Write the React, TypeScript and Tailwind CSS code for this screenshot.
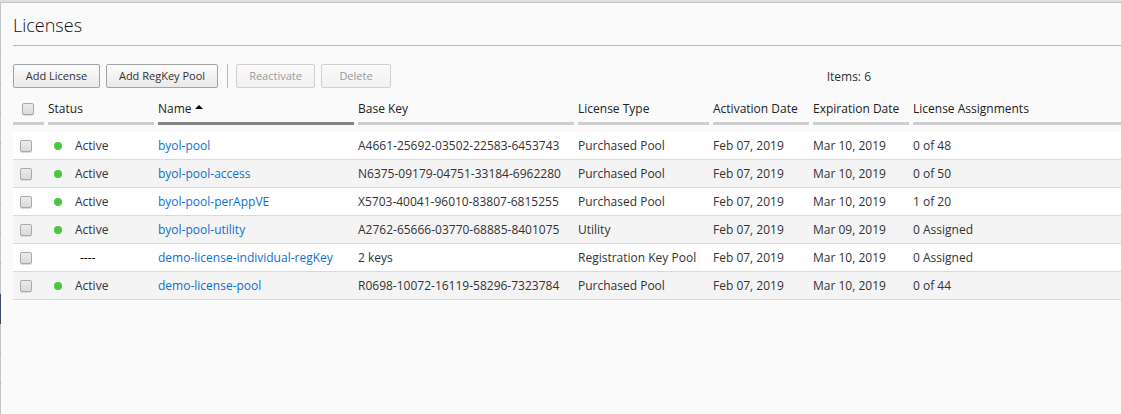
import React from "react";

type License = {
  status: "Active" | "----";
  name: string;
  baseKey: string;
  type: string;
  activation: string;
  expiration: string;
  assignments: string;
};

const licenses: License[] = [
  { status: "Active", name: "byol-pool", baseKey: "A4661-25692-03502-22583-6453743", type: "Purchased Pool", activation: "Feb 07, 2019", expiration: "Mar 10, 2019", assignments: "0 of 48" },
  { status: "Active", name: "byol-pool-access", baseKey: "N6375-09179-04751-33184-6962280", type: "Purchased Pool", activation: "Feb 07, 2019", expiration: "Mar 10, 2019", assignments: "0 of 50" },
  { status: "Active", name: "byol-pool-perAppVE", baseKey: "X5703-40041-96010-83807-6815255", type: "Purchased Pool", activation: "Feb 07, 2019", expiration: "Mar 10, 2019", assignments: "1 of 20" },
  { status: "Active", name: "byol-pool-utility", baseKey: "A2762-65666-03770-68885-8401075", type: "Utility", activation: "Feb 07, 2019", expiration: "Mar 09, 2019", assignments: "0 Assigned" },
  { status: "----", name: "demo-license-individual-regKey", baseKey: "2 keys", type: "Registration Key Pool", activation: "Feb 07, 2019", expiration: "Mar 10, 2019", assignments: "0 Assigned" },
  { status: "Active", name: "demo-license-pool", baseKey: "R0698-10072-16119-58296-7323784", type: "Purchased Pool", activation: "Feb 07, 2019", expiration: "Mar 10, 2019", assignments: "0 of 44" },
];

const columns = [
  { label: "Status", width: "w-[110px]" },
  { label: "Name", width: "w-[200px]", sorted: true },
  { label: "Base Key", width: "w-[220px]" },
  { label: "License Type", width: "w-[135px]" },
  { label: "Activation Date", width: "w-[100px]" },
  { label: "Expiration Date", width: "w-[100px]" },
  { label: "License Assignments", width: "", last: true },
];

function ToolButton({ children, width, disabled }: { children: React.ReactNode; width: string; disabled?: boolean }) {
  return (
    <button
      type="button"
      disabled={disabled}
      className={`${width} h-6 shrink-0 whitespace-nowrap rounded-xs border border-[#a3a3a3] bg-linear-to-b from-[#fcfcfc] to-[#e9e9e9] text-[11px] leading-4 text-[#333] disabled:border-[#cfcfcf] disabled:from-[#fafafa] disabled:to-[#f1f1f1] disabled:text-[#999]`}
    >
      {children}
    </button>
  );
}

function Tick({ label }: { label: string }) {
  return (
    <input
      type="checkbox"
      aria-label={label}
      className="block size-3 appearance-none rounded-xs border border-[#a9a9a9] bg-linear-to-b from-[#ececec] to-[#dadada] shadow-[0_1px_0_#dcdcdc] checked:bg-[#1a73c9]"
    />
  );
}

function NavEdge() {
  return (
    <div aria-hidden="true" className="flex w-px shrink-0 flex-col bg-[#c6c6c6]">
      <div className="h-[52px] border-b border-[#a9a9a9]" />
      {Array.from({ length: 8 }, (_, i) => (
        <div key={i} className="h-[30px] border-b border-[#a9a9a9]" />
      ))}
      <div className="h-[30px] bg-[#3a4c68]" />
      <div className="h-[30px] border-b border-[#a9a9a9]" />
      <div className="h-[30px] border-b border-[#a9a9a9]" />
    </div>
  );
}

export default function App() {
  return (
    <div className="flex min-h-screen flex-col overflow-hidden border-t-2 border-[#dadfe2] bg-[#fafafa] font-['Open_Sans','Noto_Sans',sans-serif] text-xs text-[#333]">
      <div className="flex grow">
        <NavEdge />
        <main className="min-w-0 grow border-t border-[#c1c5c8] pl-3">
          <h1 className="border-b border-[#b8b8b8] pt-2.5 pb-2 text-lg leading-6 font-light text-[#111]">Licenses</h1>

          <div className="mt-[18px] flex h-6 items-center gap-1.5">
            <ToolButton width="w-[87px]">Add License</ToolButton>
            <ToolButton width="w-[112px]">Add RegKey Pool</ToolButton>
            <div className="ml-[3px] mr-0.5 h-6 w-px shrink-0 bg-[#b5b5b5]" />
            <ToolButton width="w-[79px]" disabled>Reactivate</ToolButton>
            <ToolButton width="w-[70px]" disabled>Delete</ToolButton>
            <span className="mr-[250px] ml-auto pt-0.5 whitespace-nowrap">Items: 6</span>
          </div>

          <table className="mt-2.5 w-full table-fixed border-separate border-spacing-0 text-left">
            <thead>
              <tr>
                <th className="w-[35px] p-0 pb-[7px]">
                  <div className="mr-1 flex h-[27px] items-center border-b-[3px] border-[#cecece] pb-0.5 pl-[9px]">
                    <Tick label="Select all licenses" />
                  </div>
                </th>
                {columns.map((c) => (
                  <th
                    key={c.label}
                    aria-sort={c.sorted ? "ascending" : undefined}
                    className={`${c.width} p-0 pb-[7px] font-normal whitespace-nowrap text-[#222]`}
                  >
                    <div
                      className={`flex h-[27px] items-center gap-[3px] border-b-[3px] pb-0.5 ${c.sorted ? "border-[#858585]" : "border-[#cecece]"} ${c.last ? "" : "mr-1"}`}
                    >
                      {c.label}
                      {c.sorted && (
                        <svg width="8" height="4" viewBox="0 0 8 4" className="mb-1" aria-hidden="true">
                          <path d="M4 0L8 4H0Z" fill="#000" />
                        </svg>
                      )}
                    </div>
                  </th>
                ))}
              </tr>
            </thead>
            <tbody className="[&_td]:h-7 [&_td]:border-b [&_td]:border-[#dadada] [&_td]:p-0 [&_td]:whitespace-nowrap">
              {licenses.map((l) => (
                <tr key={l.name} className="bg-white even:bg-[#f4f4f4]">
                  <td>
                    <div className="pl-[7px]">
                      <Tick label={`Select ${l.name}`} />
                    </div>
                  </td>
                  <td>
                    {l.status === "Active" ? (
                      <div className="flex items-center gap-[13px] pl-1.5">
                        <span className="size-2 rounded-full bg-[#46c83c]" />
                        {l.status}
                      </div>
                    ) : (
                      <div className="pl-8 text-black">{l.status}</div>
                    )}
                  </td>
                  <td>
                    <a href="#" className="text-[#0f6fd1]">{l.name}</a>
                  </td>
                  <td>{l.baseKey}</td>
                  <td>{l.type}</td>
                  <td>{l.activation}</td>
                  <td>{l.expiration}</td>
                  <td>{l.assignments}</td>
                </tr>
              ))}
            </tbody>
          </table>
        </main>
      </div>
    </div>
  );
}
